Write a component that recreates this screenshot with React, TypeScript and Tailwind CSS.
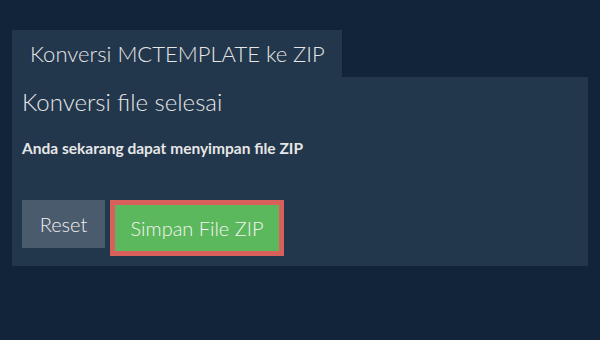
import React from "react";

export default function App() {
  return (
    <div
      className="w-[600px] h-[340px] bg-[#11243a] pt-[30px] px-[12px] text-[#e6e6e6]"
      style={{ fontFamily: "Lato, 'Open Sans', sans-serif" }}
    >
      <div className="inline-flex h-[47px] items-center bg-[#22364c] pl-[18px] pr-[17px] text-[22px] leading-none font-light">
        Konversi MCTEMPLATE ke ZIP
      </div>
      <div className="h-[189px] bg-[#22364c] px-[10px] pt-[12px]">
        <div className="text-[24px] leading-[26px] font-light">Konversi file selesai</div>
        <div className="mt-[23px] text-[15.5px] leading-[20px] font-bold">
          Anda sekarang dapat menyimpan file ZIP
        </div>
        <div className="mt-[42px] flex items-start gap-[5px]">
          <button className="w-[83px] h-[48px] bg-[#4b5b6e] text-[20px] font-light text-[#f0f0f0] flex items-center justify-center">
            Reset
          </button>
          <div className="border-[5px] border-[#d9605a]">
            <button className="w-[164px] h-[46px] bg-[#5cb85c] text-[20px] font-light text-[#f4f4f4] flex items-center justify-center">
              Simpan File ZIP
            </button>
          </div>
        </div>
      </div>
    </div>
  );
}
